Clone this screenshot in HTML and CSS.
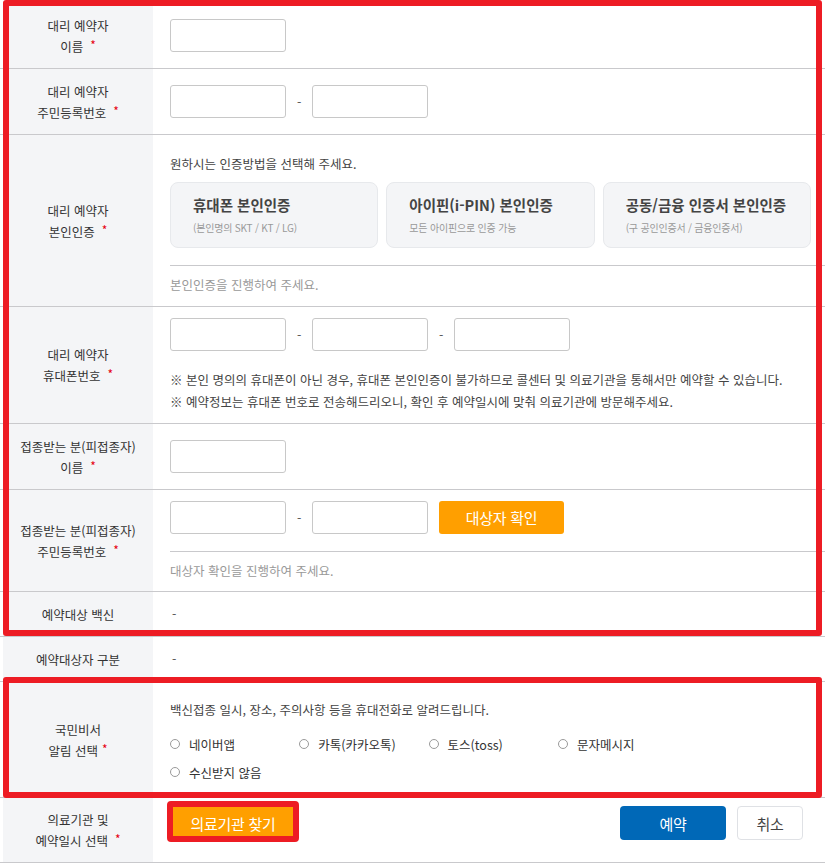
FILE: index.html
```html
<!DOCTYPE html>
<html lang="ko">
<head>
<meta charset="utf-8">
<title>대리 예약</title>
<link rel="stylesheet" href="styles.css">
</head>
<body>
<div class="page">
  <div class="form">
    <div class="row">
      <div class="th"><span>대리 예약자<br>이름<span class="req">*</span></span></div>
      <div class="td td-single"><input class="inp" type="text"></div>
    </div>
    <div class="row">
      <div class="th"><span>대리 예약자<br>주민등록번호<span class="req">*</span></span></div>
      <div class="td td-single">
        <div class="inline"><input class="inp" type="text"><span class="dash">-</span><input class="inp" type="text"></div>
      </div>
    </div>
    <div class="row">
      <div class="th"><span>대리 예약자<br>본인인증<span class="req">*</span></span></div>
      <div class="td td-auth">
        <p class="lead">원하시는 인증방법을 선택해 주세요.</p>
        <div class="cards">
          <div class="card"><div class="card-title">휴대폰 본인인증</div><div class="card-sub">(본인명의 SKT / KT / LG)</div></div>
          <div class="card"><div class="card-title">아이핀(i-PIN) 본인인증</div><div class="card-sub">모든 아이핀으로 인증 가능</div></div>
          <div class="card"><div class="card-title">공동/금융 인증서 본인인증</div><div class="card-sub">(구 공인인증서 / 금융인증서)</div></div>
        </div>
        <div class="guide guide-auth">본인인증을 진행하여 주세요.</div>
      </div>
    </div>
    <div class="row">
      <div class="th"><span>대리 예약자<br>휴대폰번호<span class="req">*</span></span></div>
      <div class="td td-phone">
        <div class="inline"><input class="inp" type="text"><span class="dash">-</span><input class="inp" type="text"><span class="dash">-</span><input class="inp" type="text"></div>
        <ul class="notes">
          <li>※ 본인 명의의 휴대폰이 아닌 경우, 휴대폰 본인인증이 불가하므로 콜센터 및 의료기관을 통해서만 예약할 수 있습니다.</li>
          <li>※ 예약정보는 휴대폰 번호로 전송해드리오니, 확인 후 예약일시에 맞춰 의료기관에 방문해주세요.</li>
        </ul>
      </div>
    </div>
    <div class="row">
      <div class="th"><span>접종받는 분(피접종자)<br>이름<span class="req">*</span></span></div>
      <div class="td td-single"><input class="inp" type="text"></div>
    </div>
    <div class="row">
      <div class="th"><span>접종받는 분(피접종자)<br>주민등록번호<span class="req">*</span></span></div>
      <div class="td td-target">
        <div class="inline"><input class="inp" type="text"><span class="dash">-</span><input class="inp" type="text"><button class="btn btn-orange btn-check" type="button">대상자 확인</button></div>
        <div class="guide">대상자 확인을 진행하여 주세요.</div>
      </div>
    </div>
    <div class="row">
      <div class="th"><span>예약대상 백신</span></div>
      <div class="td td-text">-</div>
    </div>
    <div class="row">
      <div class="th"><span>예약대상자 구분</span></div>
      <div class="td td-text">-</div>
    </div>
    <div class="row">
      <div class="th"><span>국민비서<br>알림 선택<span class="req req-tight">*</span></span></div>
      <div class="td td-notify">
        <p class="lead">백신접종 일시, 장소, 주의사항 등을 휴대전화로 알려드립니다.</p>
        <div class="radios">
          <label class="radio"><span class="circle"></span>네이버앱</label>
          <label class="radio"><span class="circle"></span>카톡(카카오톡)</label>
          <label class="radio"><span class="circle"></span>토스(toss)</label>
          <label class="radio"><span class="circle"></span>문자메시지</label>
          <label class="radio"><span class="circle"></span>수신받지 않음</label>
        </div>
      </div>
    </div>
    <div class="row">
      <div class="th"><span>의료기관 및<br>예약일시 선택<span class="req">*</span></span></div>
      <div class="td td-actions">
        <button class="btn btn-orange btn-find" type="button">의료기관 찾기</button>
        <div class="action-group">
          <button class="btn btn-blue" type="button">예약</button>
          <button class="btn btn-white" type="button">취소</button>
        </div>
      </div>
    </div>
  </div>
  <div class="mark mark-a"></div>
  <div class="mark mark-b"></div>
  <div class="mark mark-c"></div>
</div>
</body>
</html>
```

FILE: styles.css
```css
* { box-sizing: border-box; }
html, body { margin: 0; padding: 0; background: #fff; }
body {
  font-family: "Noto Sans CJK KR", "Noto Sans", sans-serif;
  font-size: 12.5px;
  color: #333;
}
.page { position: relative; width: 825px; padding-top: 3px; }
.form { width: 825px; }
.row { display: flex; border-bottom: 1px solid #c9c9cc; }
.th {
  width: 150px;
  margin-left: 3px;
  flex: none;
  background: #f4f5f7;
  display: flex;
  align-items: center;
  justify-content: center;
  text-align: center;
  line-height: 21px;
  color: #333;
}
.req { color: #e60012; margin-left: 7px; font-size: 12px; position: relative; top: -2px; }
.req-tight { margin-left: 4px; }
.td { flex: 1; padding-left: 17px; }
.td-single { padding-top: 16px; padding-bottom: 16px; }
.inline { display: flex; align-items: center; height: 33px; }
.inp {
  width: 116px;
  height: 33px;
  border: 1px solid #c8c8c8;
  border-radius: 3px;
  background: #fff;
  margin: 0;
  padding: 0 8px;
  font: inherit;
}
.dash { width: 4px; margin: 0 11px; color: #555; text-align: center; line-height: 20px; }
.lead { margin: 0; line-height: 20px; color: #444; }
.td-auth { padding-top: 19px; }
.cards {
  display: grid;
  grid-template-columns: repeat(3, 1fr);
  column-gap: 8px;
  margin-top: 8px;
  padding-right: 14px;
}
.card {
  height: 66px;
  background: #f4f5f7;
  border: 1px solid #e7e9ec;
  border-radius: 8px;
  padding: 12px 22px 0;
}
.card-title { font-size: 14.5px; font-weight: 700; color: #444; line-height: 20px; }
.card-sub { font-size: 10px; color: #999; line-height: 14px; margin-top: 6px; letter-spacing: -0.2px; }
.guide {
  border-top: 1px solid #c9c9cc;
  margin-top: 17px;
  padding: 9px 0 10px;
  line-height: 20px;
  color: #999;
}
.guide-auth { padding-bottom: 11px; }
.td-phone { padding-top: 11px; padding-bottom: 10px; }
.notes { list-style: none; margin: 18px 0 0; padding: 0; line-height: 22px; color: #444; }
.td-target { padding-top: 11px; }
.td-text { padding-top: 12px; padding-bottom: 12px; line-height: 20px; color: #555; padding-left: 19px; }
.td-notify { padding-top: 18px; padding-bottom: 11px; }
.radios { display: grid; grid-template-columns: repeat(4, 129.3px); margin-top: 10px; }
.radio { display: flex; align-items: center; height: 28px; color: #333; }
.circle {
  width: 10px; height: 10px;
  border: 1px solid #9a9a9a;
  border-radius: 50%;
  background: #fff;
  margin-right: 9px;
  flex: none;
}
.btn {
  border: 0;
  margin: 0;
  font-family: inherit;
  font-size: 15px;
  letter-spacing: -0.3px;
  cursor: pointer;
  border-radius: 3px;
  padding: 0;
}
.btn-orange { background: #ff9f00; color: #fff; }
.btn-check { width: 125px; height: 33px; margin-left: 11px; }
.td-actions {
  display: flex;
  justify-content: space-between;
  align-items: flex-start;
  padding-top: 8px;
  padding-bottom: 22px;
  padding-right: 22px;
}
.btn-find { width: 126px; height: 34px; }
.action-group { display: flex; gap: 11px; }
.btn-blue { width: 106px; height: 34px; background: #0068b7; color: #fff; border-radius: 4px; }
.btn-white { width: 66px; height: 34px; background: #fff; color: #444; border: 1px solid #dfe1e5; border-radius: 4px; }
.mark {
  position: absolute;
  border: 6px solid #ed1c24;
  border-radius: 3px;
  pointer-events: none;
}
.mark-a { left: 3px; top: 0; width: 819px; height: 636px; }
.mark-b { left: 3px; top: 677px; width: 819px; height: 121px; }
.mark-c { left: 167px; top: 801px; width: 132px; height: 41px; border-radius: 4px; }
```
